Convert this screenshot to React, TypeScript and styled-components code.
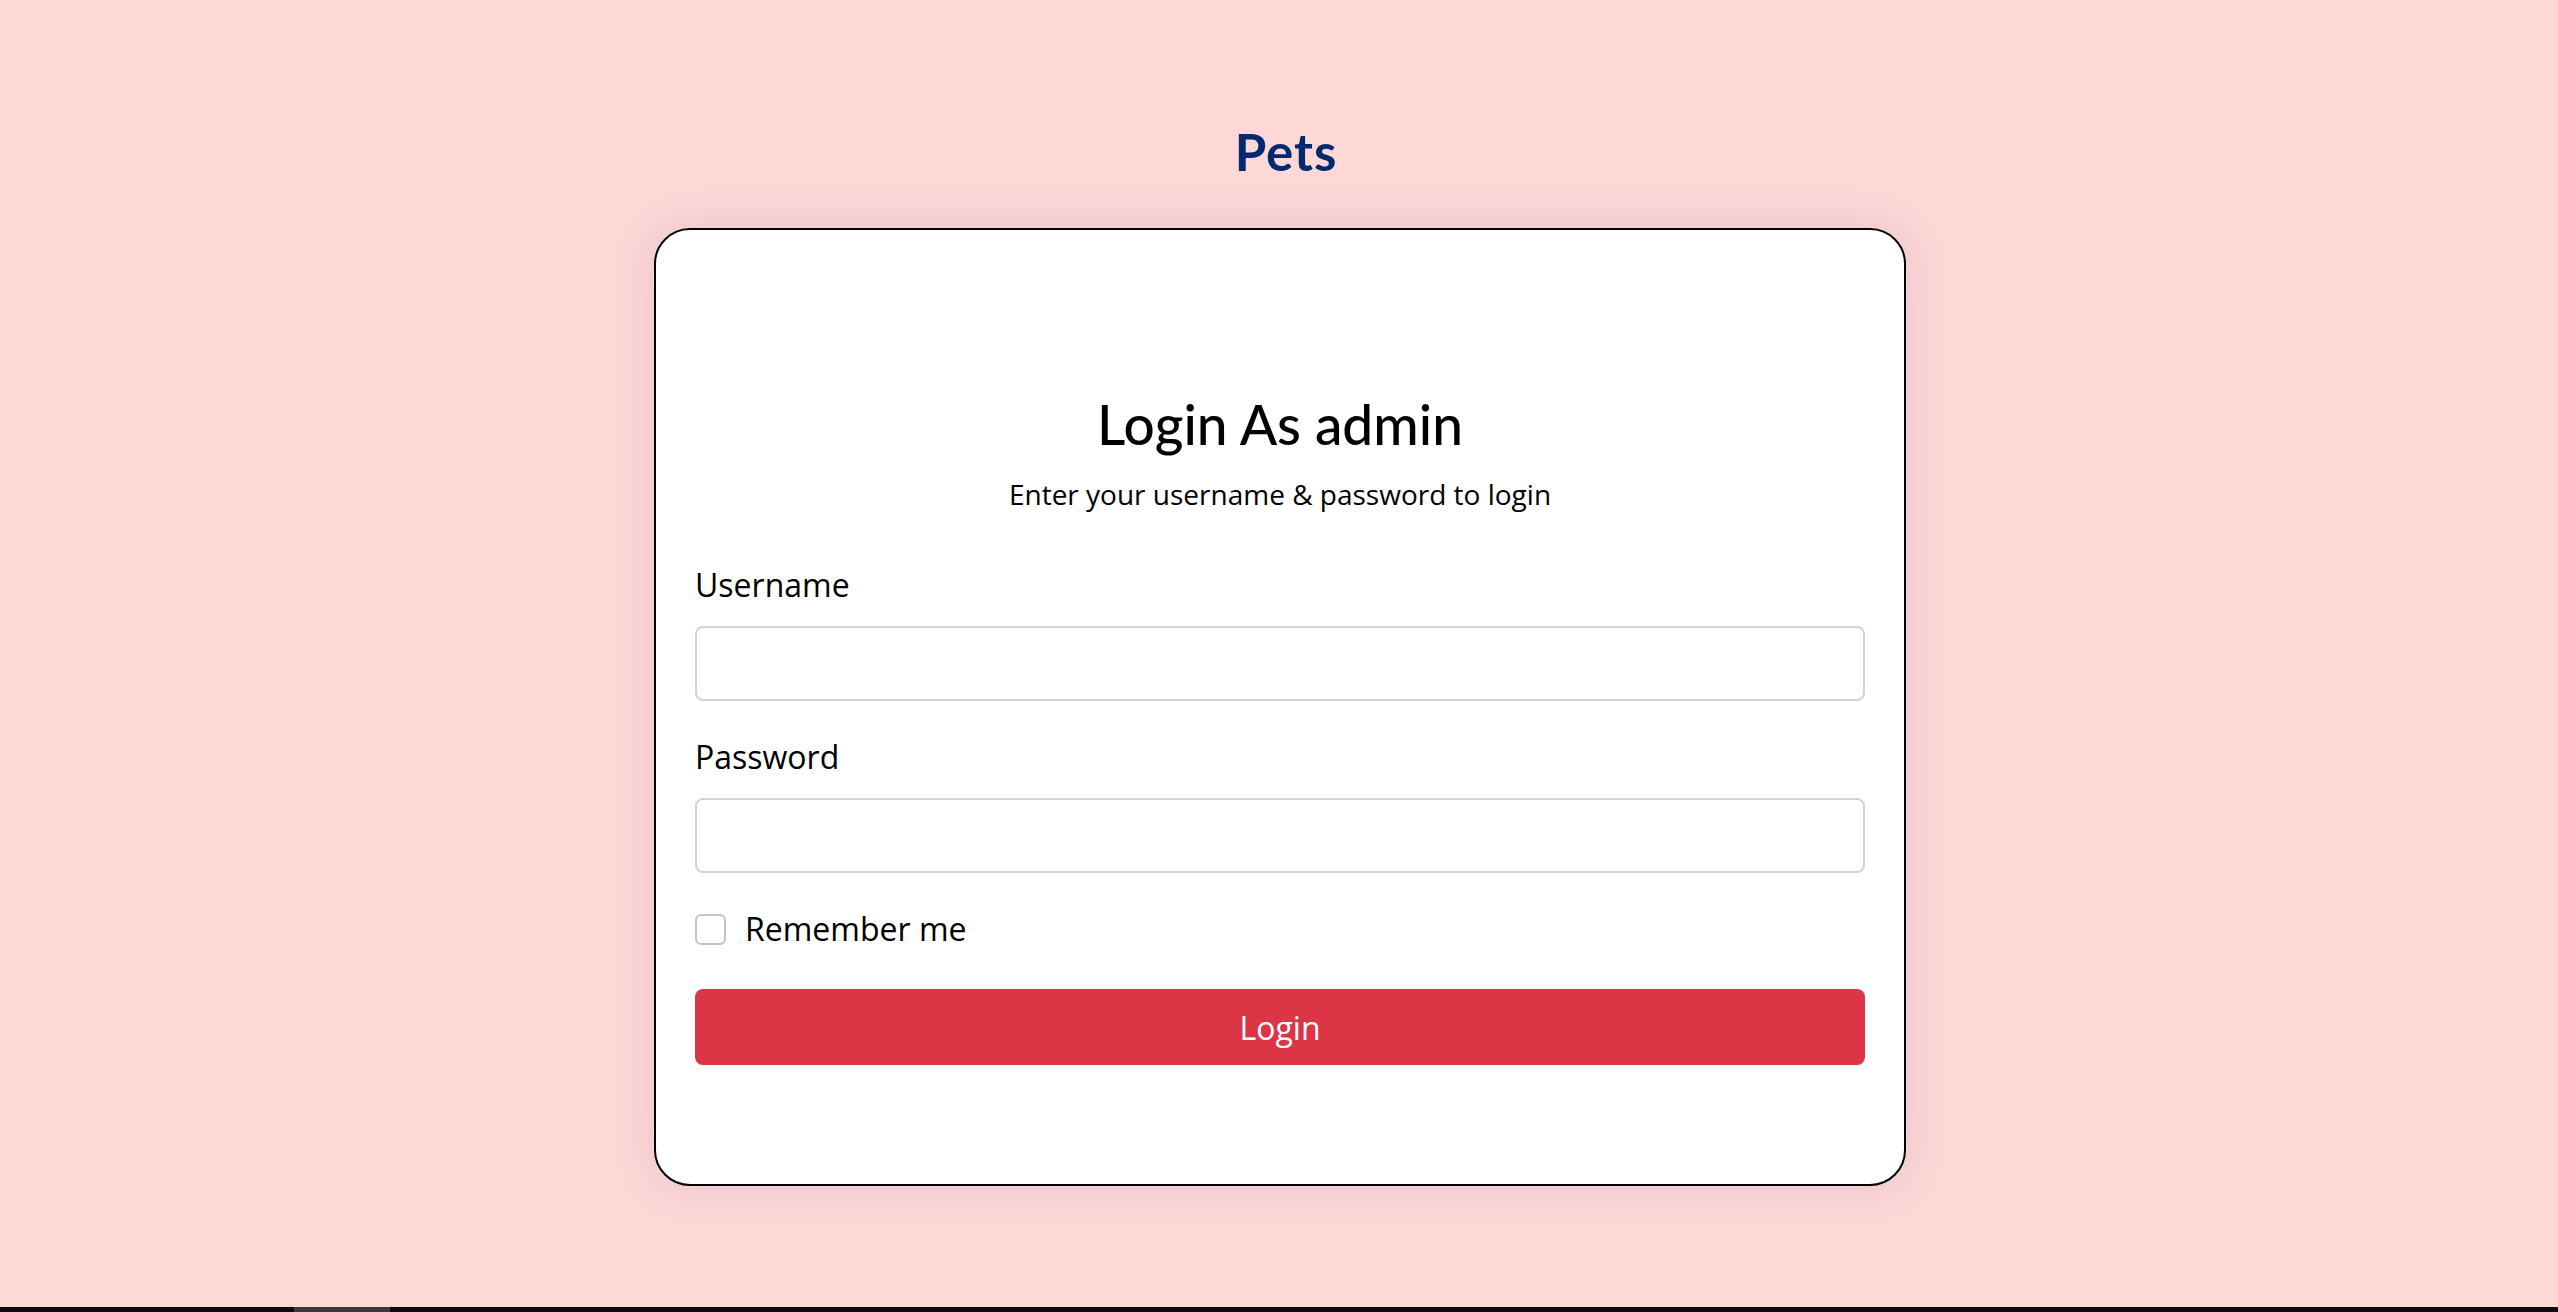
import styled, { createGlobalStyle } from 'styled-components';

const GlobalStyle = createGlobalStyle`
    html, body {
        margin: 0;
        padding: 0;
        background: #fed7d7;
        font-family: 'Open Sans', 'Liberation Sans', sans-serif;
        color: #000;
    }
    * {
        box-sizing: border-box;
    }
`;

const Page = styled.div`
    min-height: 100vh;
    display: flex;
    flex-direction: column;
`;

const Main = styled.main`
    flex: 1;
    display: flex;
    flex-direction: column;
    align-items: center;
    padding-top: 122px;
`;

const Brand = styled.a`
    display: block;
    margin: 0 0 46px 14px;
    font-family: Lato, 'Open Sans', sans-serif;
    font-size: 51px;
    line-height: 60px;
    font-weight: 700;
    letter-spacing: 1px;
    color: #012970;
    text-decoration: none;
`;

const Card = styled.section`
    width: 1252px;
    margin-left: 2px;
    background: #fff;
    border: 2px solid #000;
    border-radius: 36px;
    box-shadow: 0 0 48px rgba(1, 41, 112, 0.1);
    padding: 161px 39px 119px;
`;

const Heading = styled.div`
    text-align: center;
    margin-bottom: 46px;
`;

const Title = styled.h5`
    margin: 0 0 16px;
    font-family: Lato, 'Open Sans', sans-serif;
    font-size: 55px;
    line-height: 66px;
    font-weight: 500;
    color: #000;
`;

const Subtitle = styled.p`
    margin: 0;
    font-size: 28px;
    line-height: 42px;
`;

const Form = styled.form`
    display: flex;
    flex-direction: column;
`;

const Field = styled.div<{ gap?: number }>`
    margin-bottom: ${(p) => p.gap ?? 32}px;
`;

const Label = styled.label`
    display: block;
    font-size: 32px;
    line-height: 48px;
    margin-bottom: 17px;
`;

const Input = styled.input`
    display: block;
    width: 100%;
    height: 75px;
    border: 2px solid #ced4da;
    border-radius: 8px;
    padding: 0 20px;
    font-family: inherit;
    font-size: 32px;
    background: #fff;
    outline: none;
`;

const CheckRow = styled.label`
    display: flex;
    align-items: center;
    gap: 19px;
    font-size: 32px;
    line-height: 48px;
    margin-bottom: 36px;
`;

const Check = styled.input`
    appearance: none;
    margin: 0;
    width: 31px;
    height: 31px;
    border: 2px solid #c4c4c4;
    border-radius: 6px;
    background: #fff;
`;

const Button = styled.button`
    width: 100%;
    height: 76px;
    border: none;
    border-radius: 8px;
    background: #dc3545;
    color: #fff;
    font-family: inherit;
    font-size: 32px;
    cursor: pointer;
`;

const ScrollTrack = styled.div`
    height: 5px;
    background: #0b0b12;
    display: flex;
`;

const ScrollThumb = styled.div`
    margin-left: 294px;
    width: 96px;
    background: #3a3a40;
`;

export default function App() {
    return (
        <>
            <GlobalStyle />
            <Page>
                <Main>
                    <Brand href="#">Pets</Brand>
                    <Card>
                        <Heading>
                            <Title>Login As admin</Title>
                            <Subtitle>Enter your username &amp; password to login</Subtitle>
                        </Heading>
                        <Form onSubmit={(e) => e.preventDefault()}>
                            <Field>
                                <Label htmlFor="username">Username</Label>
                                <Input id="username" type="text" />
                            </Field>
                            <Field>
                                <Label htmlFor="password">Password</Label>
                                <Input id="password" type="password" />
                            </Field>
                            <CheckRow>
                                <Check type="checkbox" />
                                Remember me
                            </CheckRow>
                            <Button type="submit">Login</Button>
                        </Form>
                    </Card>
                </Main>
                <ScrollTrack>
                    <ScrollThumb />
                </ScrollTrack>
            </Page>
        </>
    );
}
